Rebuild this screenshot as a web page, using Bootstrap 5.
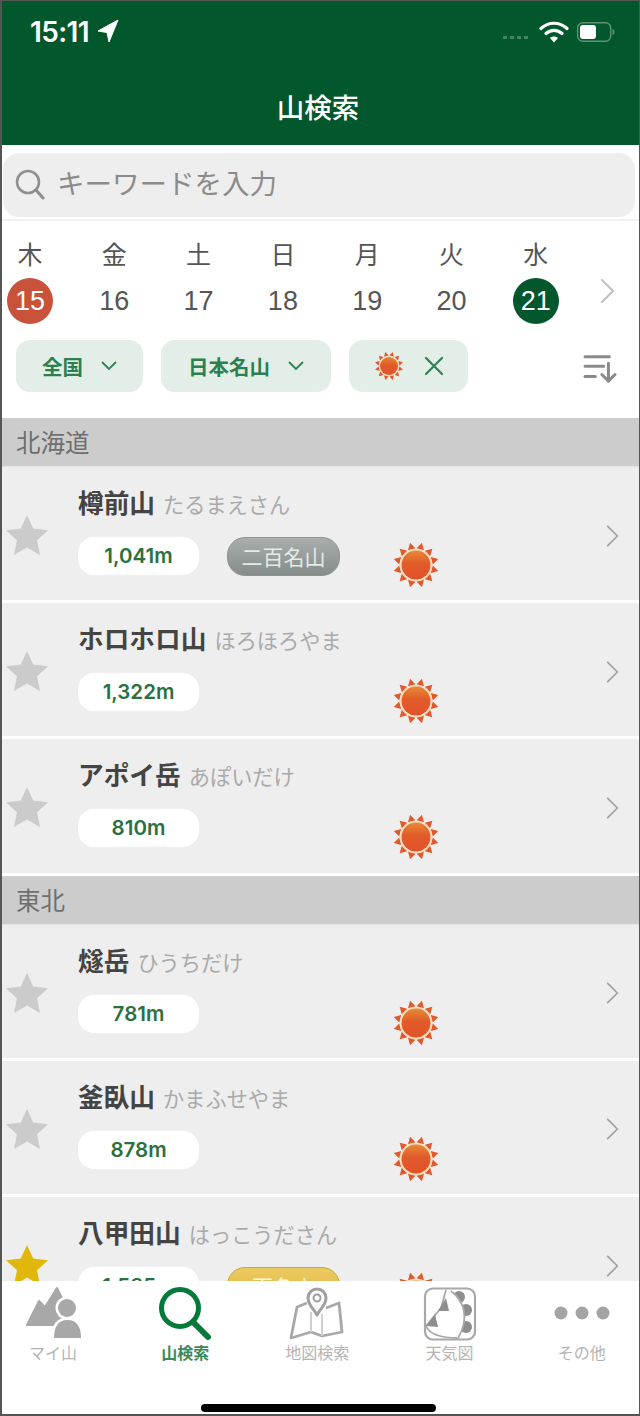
<!DOCTYPE html>
<html lang="ja">

<head>
    <meta charset="UTF-8">
    <meta name="viewport" content="width=device-width, initial-scale=1.0">
    <link href="https://cdn.jsdelivr.net/npm/bootstrap@5.3.2/dist/css/bootstrap.min.css" rel="stylesheet">
    <style>
        html, body { height: 100%; overflow: hidden; }
        body { font-family: "Noto Sans CJK JP", "Liberation Sans", sans-serif; background: #fff; color: #444; }
        .phone { height: 1416px; border: 1px solid #555; border-left-width: 2px; border-bottom-width: 2px; overflow: hidden; }
        .app-head { background: #02582c; color: #fff; height: 144px; flex: none; }
        .status { height: 62px; padding: 14px 24px 0 28px; }
        .clock { font-family: Inter, "Liberation Sans", sans-serif; font-size: 28px; font-weight: 600; line-height: 34px; letter-spacing: -.6px; }
        .sig-row { height: 34px; }
        .sig-dots { width: 28px; margin-right: 8px; margin-top: 10px; gap: 3px; }
        .sig-dots i { width: 4px; height: 3px; background: #3f8560; display: block; }
        .app-title { font-size: 27.5px; font-weight: 500; line-height: 36px; padding: 25px 5px 0 0; }
        .search-wrap { padding: 8px 4px 4px 1px; border-bottom: 2px solid #f1f1f1; height: 76px; flex: none; }
        .search-box { background: #eeeeee; border-radius: 16px; height: 64px; padding-left: 12px; color: #8b8b8b; font-size: 27.5px; line-height: 1; gap: 12px; }
        .search-box span { padding-bottom: 4px; }
        .days { padding: 14px 0 0 5px; gap: 38.3px; height: 118px; flex: none; }
        .day-col { width: 46px; text-align: center; }
        .day-name { font-size: 25px; line-height: 36px; color: #555; }
        .day-num { width: 46px; height: 46px; margin-top: 7px; border-radius: 50%; font-family: "Liberation Sans", sans-serif; font-size: 27px; line-height: 46px; color: #555; }
        .day-today { background: #c9533a; color: #fff; }
        .day-sel { background: #02582c; color: #fff; }
        .day-next { margin: 42px 0 0 3px; }
        .chips { height: 79px; padding: 1px 22px 0 14px; gap: 18px; flex: none; }
        .chip { height: 52px; background: #e3eee8; border-radius: 14px; color: #2b8050; font-size: 20.5px; font-weight: 600; gap: 18px; }
        .chip-a { width: 127px; }
        .chip-b { width: 170px; }
        .chip-c { width: 119px; gap: 20px; }
        .sort-ico { margin-top: 13px; }
        .list-area { flex: 1 1 0; min-height: 0; overflow: hidden; }
        .sect { height: 49px; background: #cccccc; border-bottom: 1px solid #e4e4e4; color: #6f6f6f; font-size: 24.5px; line-height: 48px; padding-left: 14px; }
        .mtn-group { margin-bottom: 1px; }
        .mtn { height: 133.2px; background: #eeeeee; margin-bottom: 3px; }
        .mtn-star { width: 76px; padding: 48px 0 0 4px; flex: none; }
        .mtn-body { width: 500px; flex: none; padding-top: 17px; }
        .mtn-name { font-size: 25.7px; font-weight: 700; line-height: 36px; color: #444; }
        .mtn-kana { font-size: 21.2px; font-weight: 400; color: #aaa; margin-left: 8px; }
        .mtn-tags { margin-top: 15px; height: 40px; position: relative; }
        .height-pill { width: 121px; height: 38px; background: #fff; border-radius: 16px; text-align: center; color: #2a7040; font-family: Inter, "Liberation Sans", sans-serif; font-size: 20.5px; font-weight: 600; line-height: 38px; margin-right: 28px; }
        .rank { width: 113px; height: 39px; border-radius: 18px; text-align: center; color: #e6e9e8; font-size: 21px; line-height: 37px; }
        .rank-200 { background: linear-gradient(#a8aeac, #858d8a); border: 1px solid #8c9390; }
        .rank-100 { background: linear-gradient(#eccb63, #dfb133); border: 1px solid #d2a52c; color: #fff6d8; }
        .mtn-sun { position: absolute; left: 314px; top: 4px; }
        .mtn-go { padding-top: 54px; padding-left: 28px; color: #a2a2a2; }
        .tabbar { height: 133px; flex: none; background: #fff; padding-top: 6px; gap: 26.2px; margin-left: -2px; }
        .tab { width: 106px; text-align: center; color: #b4b4b4; font-size: 16px; line-height: 20px; }
        .tab svg { display: block; margin: 0 auto 1px; }
        .tab-on { color: #3a8a5a; font-weight: 600; }
        .home-line { width: 235px; height: 8px; border-radius: 4px; background: #000; position: absolute; left: 199px; bottom: 2px; }
    </style>
    <title>山検索</title>
</head>

<body>
    <svg width="0" height="0" class="position-absolute">
        <defs>
            <linearGradient id="sunFill" x1="0" y1="0" x2="0" y2="1">
                <stop offset="0" stop-color="#e58a35"></stop>
                <stop offset=".45" stop-color="#e25a2a"></stop>
                <stop offset="1" stop-color="#e0532a"></stop>
            </linearGradient>
            <symbol id="sun" viewBox="0 0 50 50">
                <g fill="#e4572a">
                    <path d="M25 1l4 7h-8z" transform="rotate(15 25 25)"></path>
                    <path d="M25 1l4 7h-8z" transform="rotate(45 25 25)"></path>
                    <path d="M25 1l4 7h-8z" transform="rotate(75 25 25)"></path>
                    <path d="M25 1l4 7h-8z" transform="rotate(105 25 25)"></path>
                    <path d="M25 1l4 7h-8z" transform="rotate(135 25 25)"></path>
                    <path d="M25 1l4 7h-8z" transform="rotate(165 25 25)"></path>
                    <path d="M25 1l4 7h-8z" transform="rotate(195 25 25)"></path>
                    <path d="M25 1l4 7h-8z" transform="rotate(225 25 25)"></path>
                    <path d="M25 1l4 7h-8z" transform="rotate(255 25 25)"></path>
                    <path d="M25 1l4 7h-8z" transform="rotate(285 25 25)"></path>
                    <path d="M25 1l4 7h-8z" transform="rotate(315 25 25)"></path>
                    <path d="M25 1l4 7h-8z" transform="rotate(345 25 25)"></path>
                </g>
                <circle cx="25" cy="25" r="17" fill="#f8dcb8"></circle>
                <circle cx="25" cy="25" r="15" fill="url(#sunFill)"></circle>
            </symbol>
            <symbol id="star" viewBox="0 0 42 40">
                <path d="M21 0l6.200 13.600 14.800 1.700-11 10 3 14.700L21 32.600 8 40l3-14.700-11-10 14.800-1.700z"></path>
            </symbol>
            <symbol id="chev" viewBox="0 0 16 26">
                <path d="M2 2l11 11L2 24" fill="none" stroke="currentColor" stroke-width="2" stroke-linecap="round" stroke-linejoin="round"></path>
            </symbol>
        </defs>
    </svg>

    <div class="phone d-flex flex-column position-relative">
        <header class="app-head">
            <div class="status d-flex align-items-start">
                <span class="clock">15:11</span>
                <svg class="ms-2 mt-1" width="22" height="24" viewBox="0 0 22 24"><path d="M21 1L1 12l9 1.500L12 23z" fill="#fff" stroke="#fff" stroke-linejoin="round"></path></svg>
                <div class="ms-auto d-flex align-items-center sig-row">
                    <div class="sig-dots d-flex"><i></i><i></i><i></i><i></i></div>
                    <svg width="30" height="24" viewBox="0 0 30 24" class="me-2"><g fill="none" stroke="#fff" stroke-width="3.200" stroke-linecap="round"><path d="M2 8.500c7.500-7 18.500-7 26 0"></path><path d="M7 13.500c4.800-4.300 11.200-4.300 16 0"></path></g><path d="M11 18c2.400-2 5.600-2 8 0l-4 4.500z" fill="#fff"></path></svg>
                    <svg width="38" height="22" viewBox="0 0 38 22"><rect x=".7" y="1.700" width="33" height="18.600" rx="5" fill="none" stroke="#5d9277" stroke-width="1.400"></rect><rect x="3" y="4" width="16" height="14" rx="3" fill="#fff"></rect><path d="M35.500 8v6c1.600-.5 2-2 2-3s-.4-2.500-2-3z" fill="#5d9277"></path></svg>
                </div>
            </div>
            <div class="app-title text-center">山検索</div>
        </header>

        <div class="search-wrap">
            <div class="search-box d-flex align-items-center">
                <svg width="30" height="32" viewBox="0 0 30 32"><circle cx="13" cy="13" r="11" fill="none" stroke="#8f8f8f" stroke-width="2.600"></circle><path d="M21 21l7 8" stroke="#8f8f8f" stroke-width="3" stroke-linecap="round"></path></svg>
                <span>キーワードを入力</span>
            </div>
        </div>

        <div class="days d-flex" id="days"></div>

        <div class="chips d-flex align-items-start">
            <div class="chip chip-a d-flex align-items-center justify-content-center">全国
                <svg width="16" height="10" viewBox="0 0 16 10"><path d="M1.500 1.500L8 8l6.500-6.500" fill="none" stroke="#2d8250" stroke-width="1.800" stroke-linecap="round"></path></svg>
            </div>
            <div class="chip chip-b d-flex align-items-center justify-content-center">日本名山
                <svg width="16" height="10" viewBox="0 0 16 10"><path d="M1.500 1.500L8 8l6.500-6.500" fill="none" stroke="#2d8250" stroke-width="1.800" stroke-linecap="round"></path></svg>
            </div>
            <div class="chip chip-c d-flex align-items-center justify-content-center">
                <svg width="30" height="30"><use href="#sun"></use></svg>
                <svg width="20" height="20" viewBox="0 0 20 20"><path d="M2 2l16 16M18 2L2 18" stroke="#2d8250" stroke-width="2.200" stroke-linecap="round"></path></svg>
            </div>
            <svg class="ms-auto sort-ico" width="34" height="30" viewBox="0 0 36 32"><g stroke="#8a8a8a" stroke-width="3.200" fill="none" stroke-linecap="round"><path d="M2 4h26M2 14h20M2 25h11"></path><path d="M27 11v19M20 23l7 7 7-7" stroke-linejoin="round"></path></g></svg>
        </div>

        <main class="list-area" id="list"></main>

        <nav class="tabbar d-flex">
            <div class="tab">
                <svg width="56" height="54" viewBox="0 0 56 54">
                    <path d="M2 38L14 14l6 6L32 1l8 16v21z" fill="#a8a8a8" stroke="#a8a8a8" stroke-linejoin="round" stroke-width="2"></path>
                    <path d="M29 51c0-11 4-18 13.500-18S56 40 56 51z" fill="#a8a8a8" stroke="#fff" stroke-width="5" paint-order="stroke" stroke-linejoin="round"></path>
                    <circle cx="42" cy="21" r="9" fill="#a8a8a8" stroke="#fff" stroke-width="5" paint-order="stroke"></circle>
                </svg>
                マイ山
            </div>
            <div class="tab tab-on">
                <svg width="56" height="54" viewBox="0 0 56 54"><circle cx="23" cy="21" r="18.500" fill="none" stroke="#037a3a" stroke-width="5"></circle><path d="M36 35l15 15" stroke="#037a3a" stroke-width="6" stroke-linecap="round"></path></svg>
                山検索
            </div>
            <div class="tab">
                <svg width="56" height="54" viewBox="0 0 56 54">
                    <path d="M18 16L8 20 2 51l20-6 11 4 20-4-3-29-13 5" fill="none" stroke="#a8a8a8" stroke-width="2.800" stroke-linejoin="round"></path>
                    <path d="M22 25v20M33 27v22" stroke="#cfcfcf" stroke-width="2"></path>
                    <path d="M28 28c-3-6-9-10-9-17a9 9 0 0 1 18 0c0 7-6 11-9 17z" fill="#fff" stroke="#a0a0a0" stroke-width="3" stroke-linejoin="round"></path>
                    <circle cx="28" cy="11" r="3.500" fill="#fff" stroke="#a0a0a0" stroke-width="2"></circle>
                </svg>
                地図検索
            </div>
            <div class="tab">
                <svg width="56" height="54" viewBox="0 0 56 54">
                    <rect x="3" y="1.500" width="50" height="51" rx="8" fill="none" stroke="#a8a8a8" stroke-width="2.200"></rect>
                    <path d="M24 3L19 21 4 39M4 39c3 7 12 12 32 12" fill="none" stroke="#a8a8a8" stroke-width="1.800"></path>
                    <path d="M24 11l3 13-11 0zM13 27l3 13-12-1z" fill="#8e8e8e"></path>
                    <circle cx="37" cy="10" r="6" fill="#8e8e8e"></circle>
                    <circle cx="44" cy="23" r="6" fill="#8e8e8e"></circle>
                    <circle cx="44" cy="40" r="6" fill="#8e8e8e"></circle>
                    <path d="M29 4c13 10 19 27 7 47l-6-6c6-14 4-28-5-38z" fill="#fff"></path>
                    <path d="M29 4c13 10 19 27 7 47" fill="none" stroke="#a8a8a8" stroke-width="1.800"></path>
                </svg>
                天気図
            </div>
            <div class="tab">
                <svg width="56" height="54" viewBox="0 0 56 54"><circle cx="7" cy="26" r="6.500" fill="#a4a4a4"></circle><circle cx="28" cy="26" r="6.500" fill="#a4a4a4"></circle><circle cx="49" cy="26" r="6.500" fill="#a4a4a4"></circle></svg>
                その他
            </div>
        </nav>
        <div class="home-line"></div>
    </div>

    <script src="https://cdn.jsdelivr.net/npm/bootstrap@5.3.2/dist/js/bootstrap.bundle.min.js"></script>
    <script>
        // カレンダー
        const days = [['木', 15, 'day-today'], ['金', 16, ''], ['土', 17, ''], ['日', 18, ''], ['月', 19, ''], ['火', 20, ''], ['水', 21, 'day-sel']];
        document.getElementById('days').innerHTML = days.map(d => `
            <div class="day-col">
                <div class="day-name">${d[0]}</div>
                <div class="day-num ${d[2]}">${d[1]}</div>
            </div>`).join('') + '<svg class="day-next text-black-50 opacity-50" width="16" height="28"><use href="#chev"></use></svg>';

        // 山リスト
        const groups = [
            ['北海道', [
                ['樽前山', 'たるまえさん', '1,041m', 'rank-200', '二百名山', 0],
                ['ホロホロ山', 'ほろほろやま', '1,322m', '', '', 0],
                ['アポイ岳', 'あぽいだけ', '810m', '', '', 0]
            ]],
            ['東北', [
                ['燧岳', 'ひうちだけ', '781m', '', '', 0],
                ['釜臥山', 'かまふせやま', '878m', '', '', 0],
                ['八甲田山', 'はっこうださん', '1,585m', 'rank-100', '百名山', 1]
            ]]
        ];
        document.getElementById('list').innerHTML = groups.map(g => `
            <div class="sect">${g[0]}</div>
            <div class="mtn-group">${g[1].map(m => `
                <div class="mtn d-flex">
                    <div class="mtn-star"><svg width="42" height="40" fill="${m[5] ? '#e2b70c' : '#cbcbcb'}"><use href="#star"></use></svg></div>
                    <div class="mtn-body">
                        <div class="mtn-name">${m[0]}<span class="mtn-kana">${m[1]}</span></div>
                        <div class="mtn-tags d-flex">
                            <div class="height-pill">${m[2]}</div>
                            ${m[3] ? `<div class="rank ${m[3]}">${m[4]}</div>` : ''}
                            <svg class="mtn-sun" width="48" height="48"><use href="#sun"></use></svg>
                        </div>
                    </div>
                    <div class="mtn-go"><svg width="14" height="24"><use href="#chev"></use></svg></div>
                </div>`).join('')}
            </div>`).join('');
    </script>
</body>

</html>
